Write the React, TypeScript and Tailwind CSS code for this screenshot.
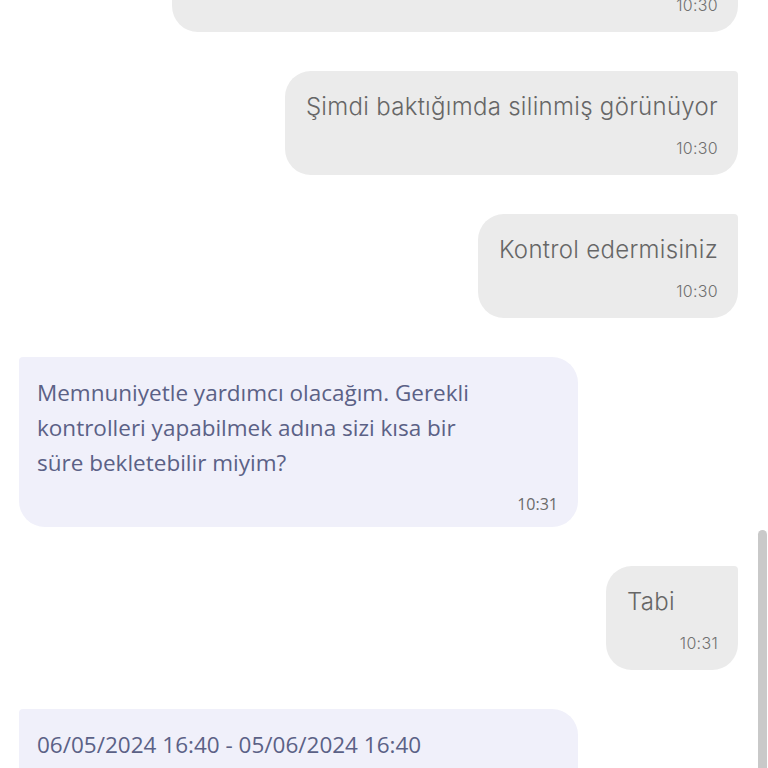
import React from "react";

type Msg = {
  id: number;
  side: "me" | "agent";
  lines: string[];
  time?: string;
};

const messages: Msg[] = [
  { id: 1, side: "me", lines: ["Hesabımdaki internet paketlerini göremiyorum"], time: "10:30" },
  { id: 2, side: "me", lines: ["Şimdi baktığımda silinmiş görünüyor"], time: "10:30" },
  { id: 3, side: "me", lines: ["Kontrol edermisiniz"], time: "10:30" },
  {
    id: 4,
    side: "agent",
    lines: [
      "Memnuniyetle yardımcı olacağım. Gerekli",
      "kontrolleri yapabilmek adına sizi kısa bir",
      "süre bekletebilir miyim?",
    ],
    time: "10:31",
  },
  { id: 5, side: "me", lines: ["Tabi"], time: "10:31" },
  {
    id: 6,
    side: "agent",
    lines: ["06/05/2024 16:40 - 05/06/2024 16:40", "Paket geçerlilik tarihleri"],
    time: "10:32",
  },
];

const MyBubble = ({ msg }: { msg: Msg }) => (
  <div className="flex justify-end">
    <div className="flex min-w-[132px] flex-col rounded-[26px] rounded-tr-[4px] bg-[#ebebeb] pl-[21px] pr-[20px] pt-[20px] pb-[17px] font-['Inter',sans-serif]">
      {msg.lines.map((l) => (
        <div key={l} className="text-[24px] leading-[32px] font-light tracking-[0.3px] text-[#666666]">
          {l}
        </div>
      ))}
      <div className="mt-[15px] self-end text-[16px] leading-[20px] font-light tracking-[0.3px] text-[#707070]">
        {msg.time}
      </div>
    </div>
  </div>
);

const AgentBubble = ({ msg }: { msg: Msg }) => (
  <div className="flex justify-start">
    <div className="flex w-[559px] flex-col rounded-[26px] rounded-tl-[4px] bg-[#f0f0fa] pl-[18px] pr-[20px] pt-[18px] pb-[13px] font-['Open_Sans',sans-serif]">
      {msg.lines.map((l) => (
        <div key={l} className="text-[22.5px] leading-[35px] text-[#5b6186]">
          {l}
        </div>
      ))}
      <div className="mt-[14px] self-end text-[16px] leading-[20px] text-[#6a6a6a]">{msg.time}</div>
    </div>
  </div>
);

export default function App() {
  return (
    <div className="relative h-[768px] w-[768px] overflow-hidden bg-white">
      <div className="mt-[-72px] flex flex-col gap-[39px] pl-[19px] pr-[30px]">
        {messages.map((m) =>
          m.side === "me" ? <MyBubble key={m.id} msg={m} /> : <AgentBubble key={m.id} msg={m} />
        )}
      </div>
      {/* scrollbar thumb */}
      <div className="absolute right-[1px] top-[530px] h-[260px] w-[9px] rounded-full bg-[#c9c9c9]" />
    </div>
  );
}
